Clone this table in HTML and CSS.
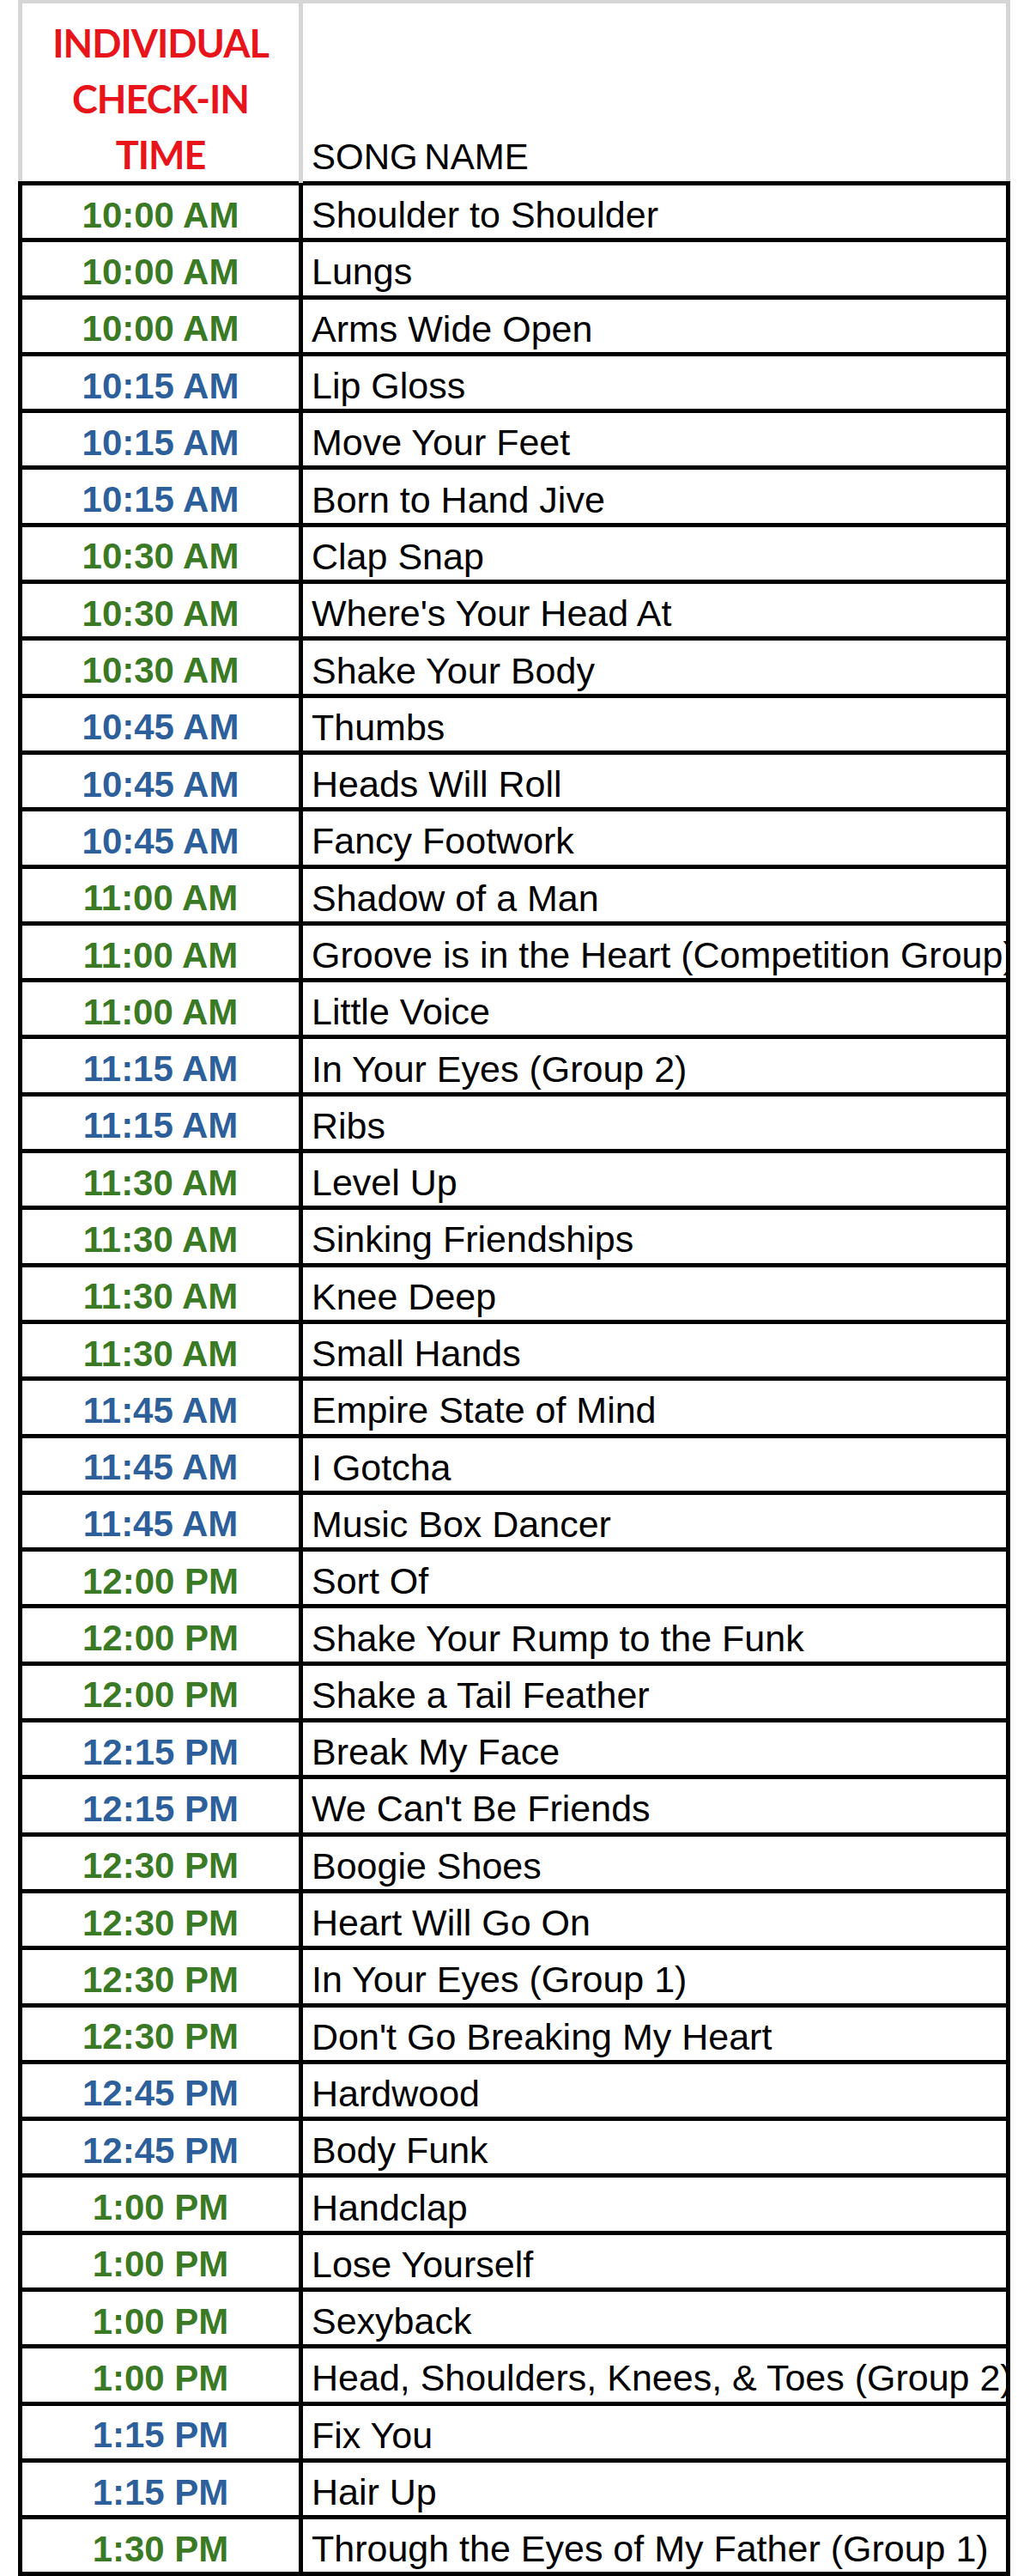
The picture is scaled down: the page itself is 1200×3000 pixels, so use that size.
FILE: index.html
```html
<!DOCTYPE html>
<html lang="en">
<head>
<meta charset="utf-8">
<title>Individual Check-In Time</title>
<link rel="stylesheet" href="styles.css">
</head>
<body>
<div class="sheet">
  <div class="head">
    <div class="hcell hcell-time"><span>INDIVIDUAL</span><span>CHECK-IN</span><span>TIME</span></div>
    <div class="hcell hcell-song">SONG NAME</div>
  </div>
  <div class="rows">
    <div class="row"><div class="time g">10:00 AM</div><div class="song">Shoulder to Shoulder</div></div>
    <div class="row"><div class="time g">10:00 AM</div><div class="song">Lungs</div></div>
    <div class="row"><div class="time g">10:00 AM</div><div class="song">Arms Wide Open</div></div>
    <div class="row"><div class="time b">10:15 AM</div><div class="song">Lip Gloss</div></div>
    <div class="row"><div class="time b">10:15 AM</div><div class="song">Move Your Feet</div></div>
    <div class="row"><div class="time b">10:15 AM</div><div class="song">Born to Hand Jive</div></div>
    <div class="row"><div class="time g">10:30 AM</div><div class="song">Clap Snap</div></div>
    <div class="row"><div class="time g">10:30 AM</div><div class="song">Where's Your Head At</div></div>
    <div class="row"><div class="time g">10:30 AM</div><div class="song">Shake Your Body</div></div>
    <div class="row"><div class="time b">10:45 AM</div><div class="song">Thumbs</div></div>
    <div class="row"><div class="time b">10:45 AM</div><div class="song">Heads Will Roll</div></div>
    <div class="row"><div class="time b">10:45 AM</div><div class="song">Fancy Footwork</div></div>
    <div class="row"><div class="time g">11:00 AM</div><div class="song">Shadow of a Man</div></div>
    <div class="row"><div class="time g">11:00 AM</div><div class="song">Groove is in the Heart (Competition Group)</div></div>
    <div class="row"><div class="time g">11:00 AM</div><div class="song">Little Voice</div></div>
    <div class="row"><div class="time b">11:15 AM</div><div class="song">In Your Eyes (Group 2)</div></div>
    <div class="row"><div class="time b">11:15 AM</div><div class="song">Ribs</div></div>
    <div class="row"><div class="time g">11:30 AM</div><div class="song">Level Up</div></div>
    <div class="row"><div class="time g">11:30 AM</div><div class="song">Sinking Friendships</div></div>
    <div class="row"><div class="time g">11:30 AM</div><div class="song">Knee Deep</div></div>
    <div class="row"><div class="time g">11:30 AM</div><div class="song">Small Hands</div></div>
    <div class="row"><div class="time b">11:45 AM</div><div class="song">Empire State of Mind</div></div>
    <div class="row"><div class="time b">11:45 AM</div><div class="song">I Gotcha</div></div>
    <div class="row"><div class="time b">11:45 AM</div><div class="song">Music Box Dancer</div></div>
    <div class="row"><div class="time g">12:00 PM</div><div class="song">Sort Of</div></div>
    <div class="row"><div class="time g">12:00 PM</div><div class="song">Shake Your Rump to the Funk</div></div>
    <div class="row"><div class="time g">12:00 PM</div><div class="song">Shake a Tail Feather</div></div>
    <div class="row"><div class="time b">12:15 PM</div><div class="song">Break My Face</div></div>
    <div class="row"><div class="time b">12:15 PM</div><div class="song">We Can't Be Friends</div></div>
    <div class="row"><div class="time g">12:30 PM</div><div class="song">Boogie Shoes</div></div>
    <div class="row"><div class="time g">12:30 PM</div><div class="song">Heart Will Go On</div></div>
    <div class="row"><div class="time g">12:30 PM</div><div class="song">In Your Eyes (Group 1)</div></div>
    <div class="row"><div class="time g">12:30 PM</div><div class="song">Don't Go Breaking My Heart</div></div>
    <div class="row"><div class="time b">12:45 PM</div><div class="song">Hardwood</div></div>
    <div class="row"><div class="time b">12:45 PM</div><div class="song">Body Funk</div></div>
    <div class="row"><div class="time g">1:00 PM</div><div class="song">Handclap</div></div>
    <div class="row"><div class="time g">1:00 PM</div><div class="song">Lose Yourself</div></div>
    <div class="row"><div class="time g">1:00 PM</div><div class="song">Sexyback</div></div>
    <div class="row"><div class="time g">1:00 PM</div><div class="song">Head, Shoulders, Knees, &amp; Toes (Group 2)</div></div>
    <div class="row"><div class="time b">1:15 PM</div><div class="song">Fix You</div></div>
    <div class="row"><div class="time b">1:15 PM</div><div class="song">Hair Up</div></div>
    <div class="row"><div class="time g">1:30 PM</div><div class="song">Through the Eyes of My Father (Group 1)</div></div>
  </div>
</div>
</body>
</html>
```

FILE: styles.css
```css
html, body {
  margin: 0;
  padding: 0;
  background: #ffffff;
}

body {
  font-family: "Liberation Sans", Arial, sans-serif;
  color: #000000;
}

.sheet {
  margin-left: 21px;
  width: 1156px;
}

/* header row with light grid lines */
.head {
  display: flex;
  height: 211px;
  box-sizing: border-box;
  border-top: 4px solid #d6d6d6;
  border-left: 5px solid #d6d6d6;
  border-right: 5px solid #d6d6d6;
}

.hcell {
  box-sizing: border-box;
}

.hcell-time {
  width: 327px;
  flex: none;
  border-right: 5px solid #d6d6d6;
  display: flex;
  flex-direction: column;
  justify-content: flex-end;
  align-items: center;
  font-family: Lato, "Open Sans", sans-serif;
  font-weight: 700;
  font-size: 45px;
  letter-spacing: -1px;
  line-height: 65px;
  color: #e8141b;
  margin-bottom: -2px;
}

.hcell-song {
  flex: 1;
  display: flex;
  align-items: flex-end;
  padding-left: 10px;
  padding-bottom: 4px;
  font-size: 42px;
  line-height: normal;
  word-spacing: -4px;
}

/* data rows */
.rows {
  border-top: 5px solid #000000;
}

.row {
  display: flex;
  height: 66.3px;
  box-sizing: border-box;
  border-left: 5px solid #000000;
  border-right: 5px solid #000000;
  border-bottom: 5px solid #000000;
}

.time,
.song {
  box-sizing: border-box;
  display: flex;
  align-items: center;
  padding-top: 8px;
  white-space: nowrap;
  overflow: hidden;
}

.time {
  width: 327px;
  flex: none;
  justify-content: center;
  border-right: 5px solid #000000;
  font-weight: 700;
  font-size: 42px;
}

.song {
  flex: 1;
  min-width: 0;
  padding-left: 10px;
  font-size: 43px;
}

.g {
  color: #3b7a25;
}

.b {
  color: #2d5f9b;
}
```
